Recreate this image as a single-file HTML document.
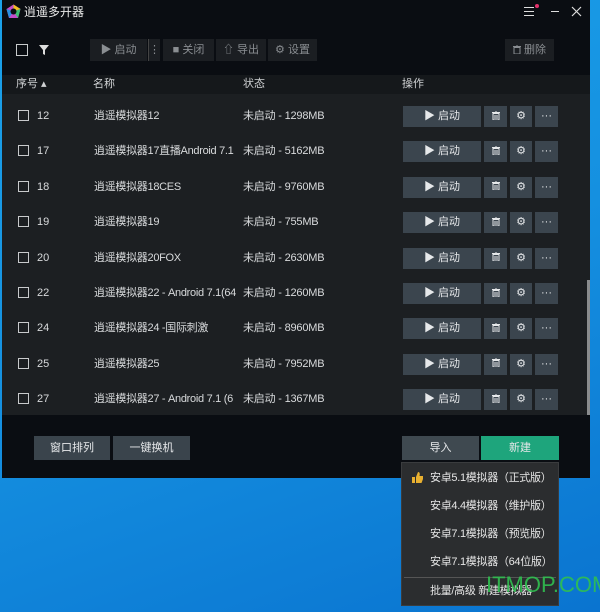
<!DOCTYPE html>
<html><head><meta charset="utf-8"><style>
*{margin:0;padding:0;box-sizing:border-box}
body{width:600px;height:612px;overflow:hidden;position:relative;background:linear-gradient(160deg,#1ba2ea 0%,#1590e0 50%,#0a74d0 100%);font-family:"Liberation Sans","Noto Sans CJK SC",sans-serif;font-size:11px;line-height:14px;color:#d8dadc}
.win{position:absolute;left:2px;top:0;width:588px;height:478px;background:#0a0d12}
.a{position:absolute}
.tb{position:absolute;top:39px;height:22px;background:#1b1e22;color:#8a8e92;font-size:11px;line-height:22px;text-align:center}
.list{position:absolute;left:2px;top:75px;width:588px;height:340px;background:#1c1f22}
.hdr{position:absolute;left:0;top:0;width:588px;height:19px;background:#15181b;color:#d0d2d4;line-height:19px}
.cb{position:absolute;width:11px;height:11px;border:1px solid #c8cacc}
.btn{position:absolute;height:21px;background:#3b454e;color:#e6e8ea;text-align:center;line-height:21px;font-size:11px}
.btn svg{vertical-align:middle;margin-top:-2px}
.menu{position:absolute;left:401px;top:462px;width:158px;height:144px;background:#2b2d2f;border:1px solid #3a3c3e}
.mi{position:absolute;left:28px;color:#e6e6e6;font-size:11px;letter-spacing:-0.3px}
</style></head><body>
<div class="win">
 <svg class="a" style="left:4px;top:4px" width="15" height="15" viewBox="0 0 15 15"><polygon points="7.5,0.5 14.5,5 12,14 3,14 0.5,5" fill="#c44cc8"/><polygon points="7.5,0.5 14.5,5 7.5,7.5" fill="#f0c020"/><polygon points="14.5,5 12,14 7.5,7.5" fill="#3cc070"/><polygon points="3,14 0.5,5 7.5,7.5" fill="#2890e0"/><circle cx="7.5" cy="7.5" r="3" fill="#0a0d12"/></svg>
 <div class="a" style="left:22px;top:5px;font-size:12px;color:#e8e8e8">逍遥多开器</div>
 <div class="a" style="left:522px;top:7px;width:10px;height:1px;background:#ddd;box-shadow:0 4px 0 #ddd,0 8px 0 #ddd"></div>
 <div class="a" style="left:533px;top:4px;width:4px;height:4px;border-radius:2px;background:#e0306a"></div>
 <div class="a" style="left:549px;top:11px;width:8px;height:1px;background:#ddd"></div>
 <svg class="a" style="left:569px;top:6px" width="11" height="11"><path d="M1 1L10 10M10 1L1 10" stroke="#ddd" stroke-width="1.2"/></svg>
 <div class="cb" style="left:14px;top:44px;width:12px;height:12px"></div>
 <svg class="a" style="left:37px;top:45px" width="10" height="10"><path d="M0 0H10L6 5V10L4 9V5Z" fill="#ddd"/></svg>
 <div class="tb" style="left:88px;width:57px">▶ 启动</div>
 <div class="tb" style="left:146px;width:12px;border-left:1px solid #444">⋮</div>
 <div class="tb" style="left:161px;width:51px">■ 关闭</div>
 <div class="tb" style="left:214px;width:50px">⇧ 导出</div>
 <div class="tb" style="left:266px;width:49px">⚙ 设置</div>
 <div class="tb" style="left:503px;width:49px"><svg width="8" height="9" style="vertical-align:middle;margin-top:-2px"><path d="M0 1.5H8M3 0H5M1 2.5H7V9H1Z" stroke="#8a8e92" fill="none"/></svg> 删除</div>
 <div class="btn" style="left:32px;top:436px;width:76px;height:24px;line-height:24px;background:#3a444c">窗口排列</div>
 <div class="btn" style="left:111px;top:436px;width:77px;height:24px;line-height:24px;background:#3a444c">一键换机</div>
 <div class="btn" style="left:400px;top:436px;width:77px;height:24px;line-height:24px;background:#3f4950">导入</div>
 <div class="btn" style="left:479px;top:436px;width:78px;height:24px;line-height:24px;background:#1ea57c">新建</div>
</div>
<div class="list">
 <div class="hdr"><span class="a" style="left:14px">序号 ▴</span><span class="a" style="left:91px">名称</span><span class="a" style="left:241px">状态</span><span class="a" style="left:400px">操作</span></div>
 <div class="a" style="left:585px;top:205px;width:3px;height:135px;background:#8a8c8e"></div>
</div>
<div id="rows"></div>
<div class="menu">
 <svg class="a" style="left:10px;top:9px" width="11" height="11"><path d="M0 5H3V11H0Z M4 5L6 0C8 0 8 2 7.5 4H11V7L9.5 11H4Z" fill="#e8b030"/></svg>
 <div class="mi" style="top:8px">安卓5.1模拟器（正式版）</div>
 <div class="mi" style="top:36px">安卓4.4模拟器（维护版）</div>
 <div class="mi" style="top:64px">安卓7.1模拟器（预览版）</div>
 <div class="mi" style="top:92px">安卓7.1模拟器（64位版）</div>
 <div class="a" style="left:2px;top:114px;width:152px;height:1px;background:#555"></div>
 <div class="mi" style="top:121px">批量/高级 新建模拟器</div>
</div>
<div class="a" style="left:486px;top:572px;font-size:22px;line-height:26px;color:#30c050;opacity:.9">ITMOP.COM</div>
<script>
var d=[["12","逍遥模拟器12","1298MB"],["17","逍遥模拟器17直播Android 7.1","5162MB"],["18","逍遥模拟器18CES","9760MB"],["19","逍遥模拟器19","755MB"],["20","逍遥模拟器20FOX","2630MB"],["22","逍遥模拟器22 - Android 7.1(64","1260MB"],["24","逍遥模拟器24 -国际刺激","8960MB"],["25","逍遥模拟器25","7952MB"],["27","逍遥模拟器27 - Android 7.1 (6","1367MB"]];
var tr='<svg width="8" height="9"><path d="M0 1.5H8M3 0H5M1 2.5H7V9H1Z" stroke="#e6e8ea" fill="none"/><path d="M3 4V8M5 4V8" stroke="#e6e8ea"/></svg>';
var h="";d.forEach(function(r,i){var c=116+i*35.4;
h+='<div class="cb" style="left:18px;top:'+(c-6)+'px"></div>';
h+='<div class="a" style="left:37px;top:'+(c-7)+'px">'+r[0]+'</div>';
h+='<div class="a" style="left:94px;top:'+(c-7)+'px;white-space:nowrap;width:142px;overflow:hidden;letter-spacing:-0.3px">'+r[1]+'</div>';
h+='<div class="a" style="left:243px;top:'+(c-7)+'px;letter-spacing:-0.2px">未启动 - '+r[2]+'</div>';
h+='<div class="btn" style="left:403px;top:'+(c-10)+'px;width:78px">▶ 启动</div>';
h+='<div class="btn" style="left:484px;top:'+(c-10)+'px;width:23px">'+tr+'</div>';
h+='<div class="btn" style="left:510px;top:'+(c-10)+'px;width:22px">⚙</div>';
h+='<div class="btn" style="left:535px;top:'+(c-10)+'px;width:23px">···</div>';});
document.getElementById("rows").innerHTML=h;
</script>
</body></html>
